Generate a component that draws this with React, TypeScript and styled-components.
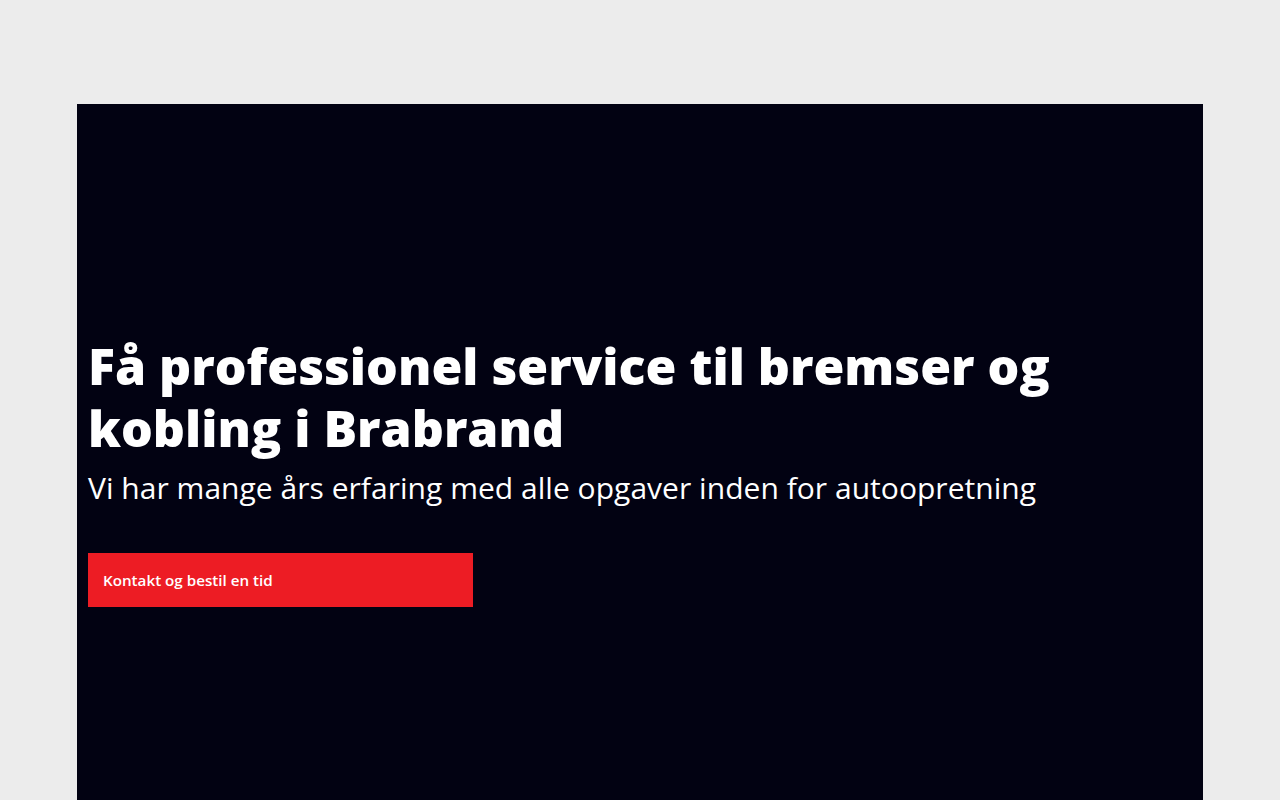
import React from "react";
import styled, { createGlobalStyle } from "styled-components";

const Global = createGlobalStyle`
  html, body { margin: 0; padding: 0; background: #ececec; }
  body { font-family: "Open Sans", sans-serif; }
  * { box-sizing: border-box; }
`;

const Page = styled.div`
  padding: 104px 77px 0;
  height: 800px;
  overflow: hidden;
`;

const Hero = styled.section`
  background: #020212;
  height: 696px;
  padding: 231px 11px 0;
  display: flex;
  flex-direction: column;
  align-items: flex-start;
`;

const Title = styled.h1`
  margin: 0;
  color: #fff;
  font-family: "Open Sans", sans-serif;
  font-weight: 800;
  font-size: 50px;
  line-height: 62px;
  max-width: 1000px;
`;

const Sub = styled.p`
  margin: 8px 0 0;
  color: #fff;
  font-family: "Open Sans", sans-serif;
  font-weight: 400;
  font-size: 30px;
  line-height: 42px;
  letter-spacing: 0.03px;
`;

const Button = styled.a`
  margin-top: 44px;
  width: 385px;
  height: 54px;
  display: flex;
  align-items: center;
  padding: 0 15px;
  background: #ed1c24;
  color: #fff;
  font-family: "Open Sans", sans-serif;
  font-weight: 600;
  font-size: 15.2px;
  text-decoration: none;
`;

export default function App() {
  return (
    <>
      <Global />
      <Page>
        <Hero>
          <Title>Få professionel service til bremser og kobling i Brabrand</Title>
          <Sub>Vi har mange års erfaring med alle opgaver inden for autoopretning</Sub>
          <Button href="#">Kontakt og bestil en tid</Button>
        </Hero>
      </Page>
    </>
  );
}
